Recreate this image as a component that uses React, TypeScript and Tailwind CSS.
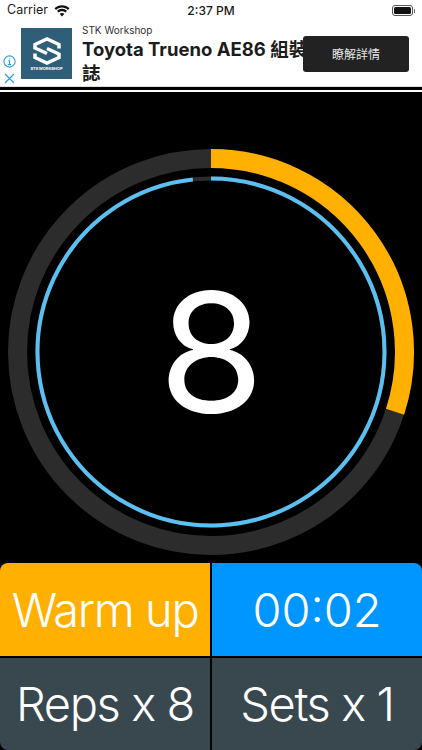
const FONT = "font-['Inter','Liberation_Sans',sans-serif]";

const CENTER = 211;
const RING_RADIUS = 193.5;
const INNER_RADIUS = 173.5;

function polar(radius: number, degrees: number) {
  const rad = ((degrees - 90) * Math.PI) / 180;
  return `${CENTER + radius * Math.cos(rad)} ${CENTER + radius * Math.sin(rad)}`;
}

function arc(radius: number, from: number, to: number) {
  const large = to - from > 180 ? 1 : 0;
  return `M ${polar(radius, from)} A ${radius} ${radius} 0 ${large} 1 ${polar(radius, to)}`;
}

function StatusBar() {
  return (
    <div className="relative flex h-[21px] items-center justify-between bg-white pl-[7px] pr-[7px] text-[12.5px] text-[#1a1a1a]">
      <div className="flex items-center gap-[6px]">
        <span>Carrier</span>
        <svg width="16" height="12" viewBox="0 0 16 12" fill="#111">
          <path d="M8 2.600c2.200 0 4.300.9 5.900 2.300l1.600-1.700C13.500 1.300 10.900.2 8 .2S2.500 1.300.5 3.200l1.600 1.700C3.700 3.500 5.800 2.600 8 2.600z" />
          <path d="M8 6.200c1.300 0 2.500.5 3.400 1.300l1.600-1.700C11.700 4.600 9.900 3.800 8 3.800s-3.700.8-5 2l1.600 1.700C5.500 6.700 6.700 6.200 8 6.200z" />
          <path d="M8 8c-.9 0-1.700.3-2.300.9L8 11.500l2.300-2.600C9.700 8.300 8.900 8 8 8z" />
        </svg>
      </div>
      <span className="absolute left-1/2 -translate-x-1/2 text-[12px] font-medium">2:37 PM</span>
      <div className="flex items-center">
        <div className="h-[11px] w-[21px] rounded-[3px] border border-[#555] p-[1px]">
          <div className="h-full w-full rounded-[1.5px] bg-[#111]" />
        </div>
        <div className="ml-[1px] h-[4px] w-[1px] bg-[#777]" />
      </div>
    </div>
  );
}

function AdBanner() {
  return (
    <div className="relative flex h-[66px] overflow-hidden border-b border-[#ddd] bg-white">
      <div className="flex w-[18px] flex-col items-center justify-end pb-[2px]">
        <svg width="13" height="13" viewBox="0 0 13 13" fill="none" stroke="#2a9fd8" strokeWidth="1.1">
          <circle cx="6.500" cy="6.500" r="5.600" />
          <path d="M6.500 5.600v4M5.200 5.700h1.300M5 9.600h3" />
          <circle cx="6.500" cy="3.700" r="0.500" fill="#2a9fd8" stroke="none" />
        </svg>
        <svg className="mt-[5px]" width="11" height="11" viewBox="0 0 11 11" fill="none" stroke="#2a9fd8" strokeWidth="1.2">
          <path d="M1 1l9 9M10 1l-9 9" />
        </svg>
      </div>
      <div className="ml-[3px] mt-[7px] flex h-[51px] w-[51px] shrink-0 flex-col items-center bg-[#2f5f78]">
        <svg className="mt-[9px]" width="32" height="28" viewBox="0 0 32 28" fill="none" stroke="#fff" strokeWidth="3.500">
          <path d="M28 11.500V7.500L16 2 4 7.500v3.500l12 5.500" />
          <path d="M4 16.500v4L16 26l12-5.500v-3.500l-12-5.500" />
        </svg>
        <span className="mt-[2px] text-[4px] font-bold leading-none text-white">STKWORKSHOP</span>
      </div>
      <div className="ml-[10px] w-[230px] shrink-0">
        <div className="mt-[3px] text-[10px] leading-[13px] text-[#333]">STK Workshop</div>
        <div className="text-[18.5px] font-bold leading-[24px] text-[#1c1c1c] font-['Inter','Noto_Sans_CJK_TC',sans-serif]">
          Toyota Trueno AE86 組裝誌
        </div>
      </div>
      <div className="absolute left-[303px] top-[15px] flex h-[36px] w-[106px] items-center justify-center rounded-[3px] bg-[#222] text-[12px] text-[#e5e5e5] font-['Noto_Sans_CJK_TC',sans-serif]">
        瞭解詳情
      </div>
    </div>
  );
}

function Dial() {
  return (
    <div className="relative h-[471px] pt-[49px]">
      <svg className="block" width="422" height="422" viewBox="0 0 422 422" fill="none">
        <circle cx={CENTER} cy={CENTER} r={RING_RADIUS} stroke="#2c2c2c" strokeWidth="19" />
        <path d={arc(RING_RADIUS, 0, 108)} stroke="#ffb000" strokeWidth="19" />
        <circle cx={CENTER} cy={CENTER} r={INNER_RADIUS} stroke="#2c2c2c" strokeWidth="4" />
        <path d={arc(INNER_RADIUS, 0, 354)} stroke="#5ac0f2" strokeWidth="4" />
      </svg>
      <div className="absolute inset-x-0 bottom-0 top-[49px] flex items-center justify-center">
        <span className="scale-x-[1.03] text-[166px] font-normal leading-none text-white">8</span>
      </div>
    </div>
  );
}

function Tile({ label, className }: { label: string; className: string }) {
  return (
    <div className={`flex items-center justify-center text-[47px] font-[350] leading-none text-white ${className}`}>
      {label}
    </div>
  );
}

export default function App() {
  return (
    <div className={`h-[750px] w-[422px] overflow-hidden bg-black ${FONT}`}>
      <StatusBar />
      <AdBanner />
      <div className="mt-[3px] h-[2px] bg-white" />
      <Dial />
      <div className="grid h-[187px] grid-cols-2 grid-rows-2 gap-[2px] bg-black">
        <Tile label="Warm up" className="rounded-tl-[8px] bg-[#ffb000] tracking-[-0.03em]" />
        <Tile label="00:02" className="rounded-tr-[8px] bg-[#0096ff]" />
        <Tile label="Reps x 8" className="rounded-bl-[8px] bg-[#39474f] tracking-[-0.03em]" />
        <Tile label="Sets x 1" className="rounded-br-[8px] bg-[#39474f] tracking-[-0.03em]" />
      </div>
    </div>
  );
}
